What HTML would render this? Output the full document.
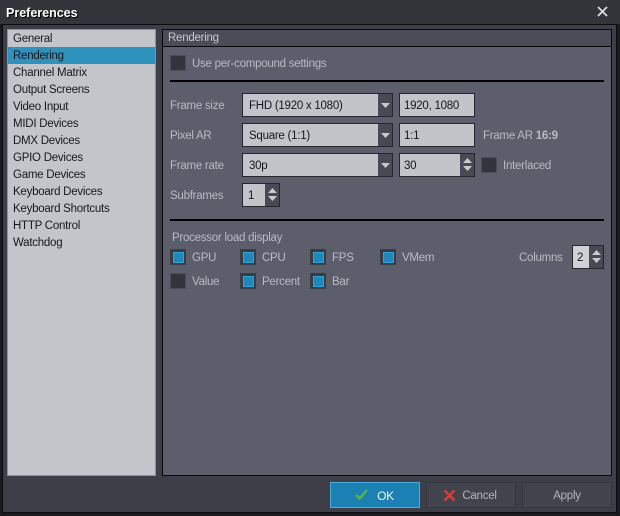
<!DOCTYPE html>
<html><head><meta charset="utf-8"><title>Preferences</title>
<style>
html,body{margin:0;padding:0;width:620px;height:516px;overflow:hidden;background:#1a1a1f}
body{font:11.5px/16px "Liberation Sans",sans-serif;letter-spacing:-0.25px;color:#c3c5cc;position:relative}
div,span{position:absolute;box-sizing:border-box;white-space:nowrap}
#title{left:0;top:0;width:620px;height:24px;background:#34343b}
#title b{position:absolute;left:6px;top:5px;font-size:12.5px;letter-spacing:0;color:#fff;text-shadow:1px 1px 0 #000}
#main{left:2px;top:24px;width:615px;height:489px;background:#3e3e48;border:1px solid #0c0c0f}
#list{left:7px;top:29px;width:149px;height:447px;background:#c4c5ca;border:1px solid #4ba6d0}
.li{left:0;width:147px;height:17px;padding-left:5px;color:#17171d;line-height:18px}
.li.s{background:#2f92bd}
#panel{left:162px;top:29px;width:450px;height:447px;background:#5c5f6b;border:1px solid #08080a}
#ph{left:0;top:0;width:448px;height:17px;background:#4a4c57;border-bottom:1px solid #08080a;padding-left:5px;line-height:17px;color:#c6c8ce}
.t{color:#b9bbc3;line-height:18px}
.cb{width:16px;height:16px;background:#33343c;border:1px solid #4b4d58}
.cb.on{background:#383a43;border:1px solid #3c3e47}
.cb.on:after{content:"";position:absolute;left:2px;top:2px;box-sizing:border-box;width:11px;height:11px;background:#1f87b9;border:1px solid #2ea6dc}
.hr{height:2px;background:#000;left:170px;width:434px}
.f{height:24px;background:#c2c4ca;border:1px solid #25262c;color:#16161c;line-height:24px;padding-left:6px}
.btnp{height:24px;background:#474a55;border:1px solid #25262c;border-left:none}
.btn{height:26px;top:482px;width:90px;background:#41434d;border:1px solid #34353d;color:#b4b6bd;text-align:center;line-height:26px}
svg{position:absolute;overflow:visible}
</style></head><body>
<div id="title"><b>Preferences</b>
<svg style="left:597px;top:6px" width="11" height="11" viewBox="0 0 11 11"><path d="M1 1 L10 10 M10 1 L1 10" stroke="#dcdcdc" stroke-width="1.8" fill="none"/></svg>
</div>
<div id="main"></div>
<div id="list">
<div class="li" style="top:0">General</div>
<div class="li s" style="top:17px">Rendering</div>
<div class="li" style="top:34px">Channel Matrix</div>
<div class="li" style="top:51px">Output Screens</div>
<div class="li" style="top:68px">Video Input</div>
<div class="li" style="top:85px">MIDI Devices</div>
<div class="li" style="top:102px">DMX Devices</div>
<div class="li" style="top:119px">GPIO Devices</div>
<div class="li" style="top:136px">Game Devices</div>
<div class="li" style="top:153px">Keyboard Devices</div>
<div class="li" style="top:170px">Keyboard Shortcuts</div>
<div class="li" style="top:187px">HTTP Control</div>
<div class="li" style="top:204px">Watchdog</div>
</div>
<div id="panel"><div id="ph">Rendering</div></div>

<div class="cb" style="left:170px;top:55px"></div>
<span class="t" style="left:192px;top:55px">Use per-compound settings</span>
<div class="hr" style="top:80px"></div>

<span class="t" style="left:170px;top:97px">Frame size</span>
<div class="f" style="left:242px;top:93px;width:137px">FHD (1920 x 1080)</div>
<div class="btnp" style="left:378px;top:93px;width:15px"><svg style="left:3px;top:9px" width="9" height="5"><path d="M0 0H9L4.5 5Z" fill="#c8cad0"/></svg></div>
<div class="f" style="left:399px;top:93px;width:76px;padding-left:4px">1920, 1080</div>

<span class="t" style="left:170px;top:127px">Pixel AR</span>
<div class="f" style="left:242px;top:123px;width:137px">Square (1:1)</div>
<div class="btnp" style="left:378px;top:123px;width:15px"><svg style="left:3px;top:9px" width="9" height="5"><path d="M0 0H9L4.5 5Z" fill="#c8cad0"/></svg></div>
<div class="f" style="left:399px;top:123px;width:76px;padding-left:4px">1:1</div>
<span class="t" style="left:483px;top:127px">Frame AR <b>16:9</b></span>

<span class="t" style="left:170px;top:157px">Frame rate</span>
<div class="f" style="left:242px;top:153px;width:137px">30p</div>
<div class="btnp" style="left:378px;top:153px;width:15px"><svg style="left:3px;top:9px" width="9" height="5"><path d="M0 0H9L4.5 5Z" fill="#c8cad0"/></svg></div>
<div class="f" style="left:399px;top:153px;width:62px;padding-left:4px">30</div>
<div class="btnp" style="left:460px;top:153px;width:15px"><svg style="left:3px;top:4px" width="9" height="13"><path d="M4.5 0L9 5H0Z M0 8H9L4.5 13Z" fill="#c8cad0"/></svg></div>
<div class="cb" style="left:481px;top:157px"></div>
<span class="t" style="left:503px;top:157px">Interlaced</span>

<span class="t" style="left:170px;top:187px">Subframes</span>
<div class="f" style="left:242px;top:183px;width:24px;padding-left:5px">1</div>
<div class="btnp" style="left:265px;top:183px;width:15px"><svg style="left:3px;top:4px" width="9" height="13"><path d="M4.5 0L9 5H0Z M0 8H9L4.5 13Z" fill="#c8cad0"/></svg></div>
<div class="hr" style="top:219px"></div>

<span class="t" style="left:172px;top:229px">Processor load display</span>
<div class="cb on" style="left:170px;top:249px"></div><span class="t" style="left:192px;top:249px">GPU</span>
<div class="cb on" style="left:240px;top:249px"></div><span class="t" style="left:262px;top:249px">CPU</span>
<div class="cb on" style="left:310px;top:249px"></div><span class="t" style="left:332px;top:249px">FPS</span>
<div class="cb on" style="left:380px;top:249px"></div><span class="t" style="left:402px;top:249px">VMem</span>
<span class="t" style="left:519px;top:249px">Columns</span>
<div class="f" style="left:572px;top:245px;width:18px;padding-left:4px;background:#d0d1d6">2</div>
<div class="btnp" style="left:589px;top:245px;width:15px"><svg style="left:3px;top:4px" width="9" height="13"><path d="M4.5 0L9 5H0Z M0 8H9L4.5 13Z" fill="#c8cad0"/></svg></div>

<div class="cb" style="left:170px;top:273px"></div><span class="t" style="left:192px;top:273px">Value</span>
<div class="cb on" style="left:240px;top:273px"></div><span class="t" style="left:262px;top:273px">Percent</span>
<div class="cb on" style="left:310px;top:273px"></div><span class="t" style="left:332px;top:273px">Bar</span>

<div class="btn" style="left:330px;background:#1b81b2;border-color:#49aedd;color:#eef3f6;padding-left:21px;font-size:12px">OK
<svg style="left:24px;top:6px" width="13" height="11" viewBox="0 0 13 11"><path d="M1 6L4.5 9.5L12 1" stroke="#5cb84a" stroke-width="2.2" fill="none"/></svg></div>
<div class="btn" style="left:426px;padding-left:17px">Cancel
<svg style="left:17px;top:7px" width="11" height="11" viewBox="0 0 11 11"><path d="M0.5 0.5L10.5 10.5M10.5 0.5L0.5 10.5" stroke="#e8392a" stroke-width="2.4" fill="none"/></svg></div>
<div class="btn" style="left:522px">Apply</div>
</body></html>
